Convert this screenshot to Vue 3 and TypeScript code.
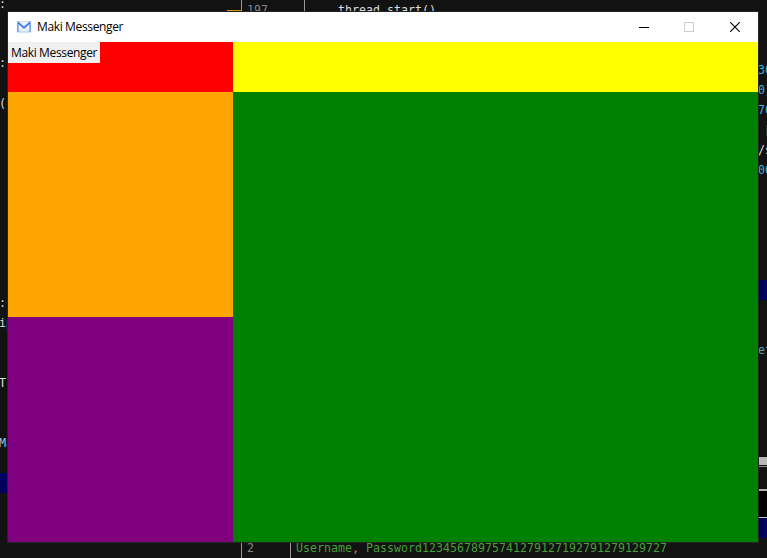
<script setup lang="ts">
interface Fragment {
  text: string
  x: number
  y: number
  tone: string
}

const title = 'Maki Messenger'

// y is the top of a 20px editor line
const fragments: Fragment[] = [
  { text: ':', x: -1, y: -6, tone: 'plain' },
  { text: ':', x: -1, y: 53, tone: 'plain' },
  { text: '(', x: -1, y: 93, tone: 'plain' },
  { text: ':', x: -1, y: 293, tone: 'plain' },
  { text: 'ip', x: -1, y: 313, tone: 'plain' },
  { text: 'T', x: -1, y: 373, tone: 'plain' },
  { text: 'Ma', x: -1, y: 433, tone: 'sky' },
  { text: '197', x: 247, y: 0, tone: 'gutter' },
  { text: 'thread.start()', x: 338, y: 0, tone: 'plain' },
  { text: '30', x: 758, y: 60, tone: 'number' },
  { text: '0]', x: 758, y: 80, tone: 'number' },
  { text: '70', x: 758, y: 100, tone: 'number' },
  { text: '[', x: 764, y: 120, tone: 'orange' },
  { text: '/s', x: 758, y: 140, tone: 'plain' },
  { text: '00', x: 758, y: 160, tone: 'number' },
  { text: 'et', x: 758, y: 340, tone: 'blue' },
  { text: '2', x: 247, y: 538, tone: 'gutter' },
  { text: 'Username', x: 296, y: 538, tone: 'green' },
  { text: ',', x: 352, y: 538, tone: 'orange' },
  { text: 'Password12345678975741279127192791279129727', x: 366, y: 538, tone: 'green' },
]
</script>

<template>
  <div class="desktop">
    <i class="rule rule-a"></i>
    <i class="rule rule-b"></i>
    <i class="rule rule-c"></i>
    <i class="marker"></i>
    <i class="band band-left"></i>
    <i class="band band-right"></i>
    <div class="side">
      <i class="scroll"></i>
      <i class="seam"></i>
      <i class="pane"></i>
      <i class="console"></i>
      <i class="selected"></i>
    </div>
    <span
      v-for="(f, i) in fragments"
      :key="i"
      class="code"
      :class="f.tone"
      :style="{ left: f.x + 'px', top: f.y + 'px' }"
    >{{ f.text }}</span>

    <section class="window">
      <header class="titlebar">
        <svg class="logo" width="14" height="12" viewBox="0 0 14 12">
          <rect x="0.5" y="0.5" width="13" height="10.5" fill="#f4f5f7" stroke="#a9c3ea" />
          <path d="M2 10.5 6 6.5M12 10.5 8 6.5" stroke="#cfd2d8" fill="none" />
          <path d="M1 11V1.5M13 11V1.5" stroke="#6b9fea" stroke-width="1.4" />
          <path d="M1 1.5 7 6.8 13 1.5" fill="none" stroke="#3f82e8" stroke-width="1.9" />
          <path d="M2.5 .5h9" stroke="#d9dde4" />
        </svg>
        <h1 class="title">{{ title }}</h1>
        <div class="controls">
          <button class="control" aria-label="Minimize">
            <svg width="10" height="10" shape-rendering="crispEdges"><path d="M0 5.5h10" stroke="#000" /></svg>
          </button>
          <button class="control" aria-label="Maximize" disabled>
            <svg width="10" height="10"><rect x=".5" y=".5" width="9" height="9" fill="none" stroke="#ccc" /></svg>
          </button>
          <button class="control" aria-label="Close">
            <svg width="10" height="10"><path d="M.2 .2 9.8 9.8M9.8 .2 .2 9.8" stroke="#000" stroke-width="1.15" /></svg>
          </button>
        </div>
      </header>
      <main class="frames">
        <div class="red"><span class="label">{{ title }}</span></div>
        <div class="yellow"></div>
        <div class="orange-frame"></div>
        <div class="green-frame"></div>
        <div class="purple"></div>
      </main>
    </section>
  </div>
</template>

<style>
body {
  margin: 0;
  overflow: hidden;
}
</style>

<style scoped>
.desktop {
  position: relative;
  width: 767px;
  height: 558px;
  overflow: hidden;
  background: #121212;
}
.window {
  position: absolute;
  left: 8px;
  top: 12px;
  width: 750px;
  height: 530px;
  display: flex;
  flex-direction: column;
  font-family: "Open Sans", "Noto Sans", sans-serif;
  font-size: 12px;
  color: #000;
  box-shadow: 0 0 0 1px #252525;
}
.titlebar {
  display: flex;
  align-items: center;
  height: 30px;
  padding-left: 9px;
  background: #fff;
}
.logo {
  display: block;
}
.title {
  flex: 1;
  margin: 0 0 0 6px;
  font-size: 12px;
  font-weight: 400;
  line-height: 30px;
  letter-spacing: -0.36px;
}
.controls {
  display: flex;
}
.control {
  display: grid;
  place-items: center;
  box-sizing: border-box;
  width: 46px;
  height: 30px;
  padding: 0 0 1px;
  border: 0;
  background: none;
}
.control:nth-child(2) {
  width: 45px;
  padding-right: 1px;
}
.frames {
  flex: 1;
  display: grid;
  grid-template-columns: 225px 1fr;
  grid-template-rows: 50px 225px 225px;
}
.red {
  display: flex;
  align-items: flex-start;
  background: red;
}
.label {
  box-sizing: border-box;
  width: 92px;
  height: 21px;
  padding-left: 3px;
  background: #f0f0f0;
  line-height: 21px;
  letter-spacing: -0.36px;
  white-space: nowrap;
}
.yellow {
  background: yellow;
}
.orange-frame {
  background: orange;
}
.green-frame {
  grid-row: 2 / 4;
  grid-column: 2;
  background: green;
}
.purple {
  background: purple;
}
.code {
  position: absolute;
  font: 11.63px/20px "DejaVu Sans Mono", monospace;
  white-space: pre;
}
.plain {
  color: #dcdcdc;
}
.gutter {
  color: #858585;
}
.number {
  color: #38b4e6;
}
.orange {
  color: #d2743c;
}
.blue {
  color: #569cb8;
}
.sky {
  color: #9cc4e4;
}
.green {
  color: #45a037;
}
.rule {
  position: absolute;
  top: 0;
  width: 1px;
  height: 558px;
  background: #999;
}
.rule-a {
  left: 241px;
}
.rule-b {
  left: 290px;
  top: 538px;
}
.rule-c {
  left: 304px;
  height: 12px;
}
.marker {
  position: absolute;
  left: 227px;
  top: 10px;
  width: 15px;
  height: 1px;
  background: #d89000;
}
.band {
  position: absolute;
  width: 10px;
  height: 20px;
  background: #00005f;
}
.band-left {
  left: 0;
  top: 473px;
}
.band-right {
  left: 758px;
  top: 280px;
}
.side {
  position: absolute;
  left: 758px;
  top: 457px;
  width: 9px;
  display: flex;
  flex-direction: column;
}
.scroll {
  height: 8px;
  background: #b8b8b8;
}
.seam {
  height: 1px;
  margin-top: 1px;
  background: #888;
}
.pane {
  height: 22px;
}
.console {
  box-sizing: border-box;
  height: 29px;
  border-top: 2px solid #b0b0b0;
  border-bottom: 1px solid #c0c0c0;
  background: #000;
}
.selected {
  height: 20px;
  background: #00005f;
}
</style>
